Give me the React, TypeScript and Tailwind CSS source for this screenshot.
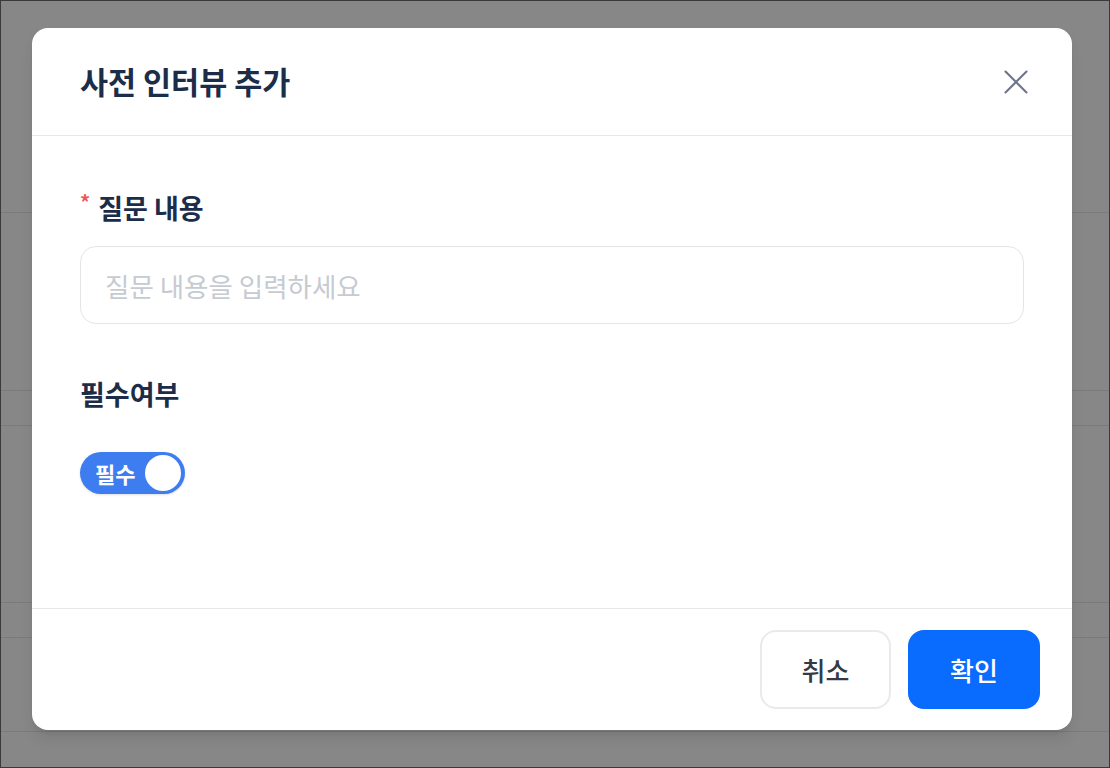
import { X } from 'lucide-react';

const FONT = '"Noto Sans CJK KR", "Noto Sans", sans-serif';

// background rows behind the dim overlay
const ROWS = [212, 178, 35, 177, 35, 94];

export default function App() {
  return (
    <div className="relative h-[768px] w-full overflow-hidden border border-[#3a3a3a] bg-white" style={{ fontFamily: FONT }}>
      {/* page underneath */}
      <div className="flex flex-col">
        {ROWS.map((h, i) => (
          <div key={i} className="border-b border-[#e5e7eb]" style={{ height: h }} />
        ))}
      </div>

      {/* dim overlay + dialog */}
      <div className="absolute inset-0 bg-black/[0.47] pl-[31px] pt-[27px]">
        <div className="flex h-[702px] w-[1040px] flex-col rounded-2xl bg-white shadow-lg">
          {/* header */}
          <div className="flex h-[108px] items-center justify-between border-b border-[#e5e7eb] pl-12 pr-[35px]">
            <h2 className="text-[30.5px] font-bold leading-none text-[#1c2d4a]">사전 인터뷰 추가</h2>
            <button className="text-[#6b7789]">
              <X size={42} strokeWidth={1.2} />
            </button>
          </div>

          {/* body */}
          <div className="flex flex-1 flex-col px-12 pt-[56px]">
            <label className="flex h-8 items-center text-[27px] font-bold text-[#1c2d4a]">
              <span className="mr-[8px] self-start text-xl leading-none text-[#f05656]">*</span>
              질문 내용
            </label>
            <input
              placeholder="질문 내용을 입력하세요"
              className="mt-[22px] h-[78px] w-full rounded-2xl border border-[#e3e5e9] px-6 text-[26.5px] text-[#1c2d4a] outline-none placeholder:text-[#c6cad2]"
            />

            <label className="mt-[54px] flex h-8 items-center text-[27px] font-bold text-[#1c2d4a]">필수여부</label>

            <div className="mt-[42px]">
              <button className="flex h-[42px] w-[105px] items-center justify-between rounded-full bg-[#3d7df0] pl-[15px] pr-[4px] shadow-sm">
                <span className="text-[22px] font-bold text-white">필수</span>
                <span className="h-[36px] w-[36px] rounded-full bg-white" />
              </button>
            </div>
          </div>

          {/* footer */}
          <div className="flex h-[122px] items-start justify-end gap-[17px] border-t border-[#e5e7eb] pr-8 pt-[21px]">
            <button className="h-[79px] w-[131px] rounded-2xl border-2 border-[#e8eaed] bg-white text-[26px] font-medium text-[#333a45]">
              취소
            </button>
            <button className="h-[79px] w-[132px] rounded-2xl bg-[#0a6cff] text-[26px] font-medium text-white">
              확인
            </button>
          </div>
        </div>
      </div>
    </div>
  );
}
